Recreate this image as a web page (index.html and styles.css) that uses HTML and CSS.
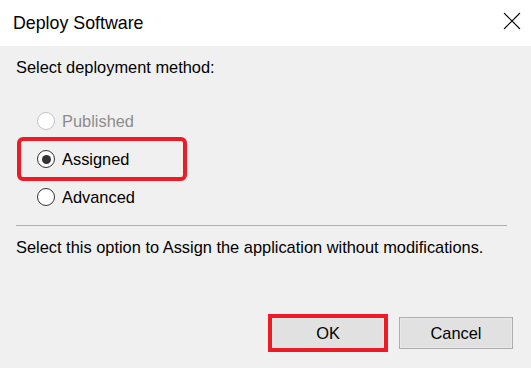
FILE: index.html
```html
<!DOCTYPE html>
<html lang="en">
<head>
    <meta charset="UTF-8">
    <title>Deploy Software</title>
    <link rel="stylesheet" href="styles.css">
</head>
<body>
    <div class="dialog">
        <div class="titlebar">
            <span class="title">Deploy Software</span>
            <svg class="close" width="18" height="18" viewBox="0 0 18 18">
                <path d="M1 1 L17 17 M17 1 L1 17" stroke="#000" stroke-width="1.1" fill="none"/>
            </svg>
        </div>

        <div class="content">
            <div class="label">Select deployment method:</div>

            <div class="options">
                <div class="option disabled">
                    <span class="radio"></span>
                    <span>Published</span>
                </div>
                <div class="option highlight">
                    <span class="radio checked"></span>
                    <span>Assigned</span>
                </div>
                <div class="option">
                    <span class="radio"></span>
                    <span>Advanced</span>
                </div>
            </div>

            <div class="separator"></div>

            <div class="description">Select this option to Assign the application without modifications.</div>

            <div class="buttons">
                <button class="btn highlight">OK</button>
                <button class="btn">Cancel</button>
            </div>
        </div>
    </div>
</body>
</html>
```

FILE: styles.css
```css
body {
    margin: 0;
    font-family: 'Liberation Sans', Arial, sans-serif;
    font-size: 16.4px;
    color: #000;
}

.dialog {
    width: 531px;
    height: 368px;
    display: flex;
    flex-direction: column;
}

.titlebar {
    height: 46px;
    background: #fff;
    display: flex;
    align-items: center;
    justify-content: space-between;
    padding: 0 13px;
}

.title {
    font-size: 17.8px;
}

.close {
    margin-top: -4px;
    margin-right: -3px;
}

.content {
    flex: 1;
    background: #f0f0f0;
    display: flex;
    flex-direction: column;
    padding: 10px 18px 19px 16px;
}

.label {
    line-height: 22px;
}

.options {
    margin-top: 24px;
    display: flex;
    flex-direction: column;
}

.option {
    height: 38px;
    width: 164px;
    margin-left: 4px;
    padding-left: 17px;
    box-sizing: border-box;
    display: flex;
    align-items: center;
    gap: 7px;
}

.option.disabled {
    color: #8c8c8c;
}

.highlight {
    outline: 4px solid #ed1c24;
    outline-offset: -1px;
    border-radius: 3px;
}

.radio {
    width: 18px;
    height: 18px;
    box-sizing: border-box;
    border: 1.5px solid #333;
    border-radius: 50%;
    background: #fff;
    display: flex;
    align-items: center;
    justify-content: center;
}

.option.disabled .radio {
    border-color: #c4c4c4;
}

.radio.checked::after {
    content: "";
    width: 9px;
    height: 9px;
    border-radius: 50%;
    background: #333;
}

.separator {
    margin-top: 9px;
    margin-right: 6px;
    border-top: 1px solid #adadad;
}

.description {
    margin-top: 10px;
    line-height: 22px;
}

.buttons {
    margin-top: auto;
    display: flex;
    justify-content: flex-end;
    gap: 14px;
}

.btn {
    width: 114px;
    height: 32px;
    background: #e1e1e1;
    border: 1px solid #adadad;
    box-shadow: inset 0 0 0 1px #e8e8e8;
    font-family: inherit;
    font-size: 16.4px;
    color: #000;
    padding: 0;
}

.btn.highlight {
    border-radius: 0;
    outline-offset: -1px;
}
```
